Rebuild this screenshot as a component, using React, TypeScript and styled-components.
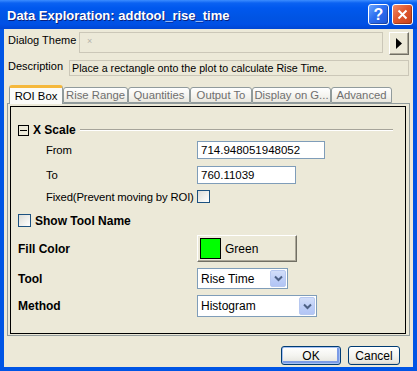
import styled, { createGlobalStyle } from 'styled-components';

const GlobalStyle = createGlobalStyle`
  html, body {
    margin: 0;
    padding: 0;
    background: #ffffff;
  }
  body {
    font-family: "Liberation Sans", Arial, sans-serif;
    font-size: 10.7px;
    color: #000;
  }
`;

// window chrome
const Window = styled.div`
  width: 417px;
  height: 371px;
  display: flex;
  flex-direction: column;
  background: #0055e5;
`;

const TitleBar = styled.div`
  height: 29px;
  flex: none;
  display: flex;
  align-items: center;
  padding: 0 4px 0 7px;
  background: linear-gradient(
    to bottom,
    #3c8dff 0px,
    #0b62f2 3px,
    #0058ee 8px,
    #0054e3 18px,
    #0051e6 24px,
    #0046d4 29px
  );
`;

const Title = styled.div`
  flex: 1;
  padding-top: 2px;
  font: bold 13px "Liberation Sans", Arial, sans-serif;
  color: #ffffff;
  text-shadow: 1px 1px 0 #0a1f7c;
  white-space: nowrap;
`;

const CaptionButton = styled.div<{ $close?: boolean }>`
  width: 21px;
  height: 21px;
  box-sizing: border-box;
  margin-left: 3px;
  border: 1px solid #ffffff;
  border-radius: 3px;
  display: flex;
  align-items: center;
  justify-content: center;
  color: #ffffff;
  font: bold 16px "Liberation Sans", Arial, sans-serif;
  background: ${(p) =>
    p.$close
      ? 'linear-gradient(135deg, #f08a68 0%, #e0582f 45%, #c7401b 100%)'
      : 'linear-gradient(135deg, #6aa6ff 0%, #2d6ff0 45%, #1f56d8 100%)'};
  box-shadow: inset -1px -1px 0 rgba(0, 0, 0, 0.25);
`;

const Client = styled.div`
  flex: 1;
  margin: 0 4px 4px;
  background: #ece9d8;
  display: flex;
  flex-direction: column;
  padding-top: 3px;
`;

// top fields
const ThemeRow = styled.div`
  display: flex;
  align-items: flex-start;
  padding-left: 4px;
  height: 23px;
`;

const TopLabel = styled.div<{ $w: number; $top: number }>`
  width: ${(p) => p.$w}px;
  flex: none;
  white-space: nowrap;
  font-size: 11px;
  padding-top: ${(p) => p.$top}px;
`;

const ThemeBox = styled.div`
  width: 304px;
  height: 21px;
  box-sizing: border-box;
  border: 1px solid #cbc7b8;
  background: #ece9d8;
  padding: 3px 0 0 7px;
  color: #b4b2a8;
  font-size: 9px;
`;

const ArrowButton = styled.div`
  width: 20px;
  height: 23px;
  box-sizing: border-box;
  margin-left: 6px;
  border: 1px solid;
  border-color: #ffffff #716f64 #716f64 #ffffff;
  box-shadow: inset -1px -1px 0 #aca899;
  display: flex;
  align-items: center;
  justify-content: center;
`;

const DescRow = styled.div`
  display: flex;
  align-items: flex-start;
  padding-left: 4px;
  margin-top: 5px;
`;

const DescBox = styled.div`
  width: 340px;
  height: 16px;
  box-sizing: border-box;
  border: 1px solid #cbc7b8;
  padding: 1px 0 0 2px;
  white-space: nowrap;
  overflow: hidden;
`;

// tabs
const TabStrip = styled.div`
  display: flex;
  align-items: flex-end;
  height: 18px;
  margin: 9px 0 0 5px;
  position: relative;
  z-index: 1;
`;

const Tab = styled.div<{ $w: number; $active?: boolean }>`
  width: ${(p) => p.$w}px;
  height: ${(p) => (p.$active ? 19 : 16)}px;
  box-sizing: border-box;
  margin-bottom: ${(p) => (p.$active ? -1 : 0)}px;
  border: 1px solid #919b9c;
  border-bottom: ${(p) => (p.$active ? 'none' : '1px solid #919b9c')};
  border-top: ${(p) => (p.$active ? '3px solid #f5b83c' : '1px solid #919b9c')};
  border-radius: 3px 3px 0 0;
  background: ${(p) =>
    p.$active ? '#fbfbf9' : 'linear-gradient(to bottom, #ffffff 0%, #f4f3ee 60%, #e9e7de 100%)'};
  color: ${(p) => (p.$active ? '#000000' : '#6f6f6f')};
  font-size: 11.3px;
  display: flex;
  align-items: center;
  justify-content: center;
  white-space: nowrap;
  padding-bottom: ${(p) => (p.$active ? 1 : 0)}px;
`;

const Panel = styled.div`
  height: 233px;
  margin: 0 3px;
  box-sizing: border-box;
  border: 1px solid #919b9c;
  display: flex;
  padding: 2px 3px 1px 2px;
`;

const GroupBox = styled.div`
  flex: 1;
  border: 1px solid #000000;
  display: flex;
  flex-direction: column;
`;

// form rows
const SectionHeader = styled.div`
  display: flex;
  align-items: center;
  height: 14px;
  margin-top: 16px;
  padding-left: 7px;
  margin-right: 12px;
`;

const CollapseBox = styled.div`
  width: 11px;
  height: 11px;
  box-sizing: border-box;
  border: 1px solid #000000;
  display: flex;
  align-items: center;
  justify-content: center;
  flex: none;
  &::after {
    content: '';
    width: 7px;
    height: 1px;
    background: #000000;
  }
`;

const BoldText = styled.span`
  font-weight: bold;
  font-size: 12px;
  white-space: nowrap;
`;

const HeaderLine = styled.div`
  flex: 1;
  height: 1px;
  margin-left: 4px;
  background: #a6a49a;
  border-bottom: 1px solid #ffffff;
`;

const FieldRow = styled.div<{ $gap: number; $h: number }>`
  display: flex;
  align-items: center;
  height: ${(p) => p.$h}px;
  margin-top: ${(p) => p.$gap}px;
`;

const FieldLabel = styled.div<{ $indent?: boolean; $bold?: boolean }>`
  width: 186px;
  flex: none;
  box-sizing: border-box;
  padding-left: ${(p) => (p.$indent ? 35 : 7)}px;
  font-weight: ${(p) => (p.$bold ? 'bold' : 'normal')};
  font-size: ${(p) => (p.$bold ? 12 : 11.3)}px;
  letter-spacing: ${(p) => (p.$bold ? 0 : -0.15)}px;
  white-space: nowrap;
`;

const CheckRow = styled.div`
  display: flex;
  align-items: center;
  gap: 4px;
  padding-left: 7px;
`;

const TextInput = styled.div<{ $w: number }>`
  width: ${(p) => p.$w}px;
  height: 18px;
  box-sizing: border-box;
  border: 1px solid #7f9db9;
  background: #ffffff;
  padding: 2px 0 0 3px;
  font-size: 11.5px;
  white-space: nowrap;
`;

const CheckBox = styled.div`
  width: 13px;
  height: 13px;
  box-sizing: border-box;
  border: 1px solid #1c5180;
  background: linear-gradient(135deg, #dcdcd7 0%, #f2f2ef 60%, #ffffff 100%);
  flex: none;
`;

const ColorButton = styled.div`
  width: 100px;
  height: 27px;
  box-sizing: border-box;
  border: 1px solid;
  border-color: #ffffff #716f64 #716f64 #ffffff;
  box-shadow: inset -1px -1px 0 #aca899;
  display: flex;
  align-items: center;
  padding-left: 2px;
  gap: 4px;
`;

const Swatch = styled.div<{ $color: string }>`
  width: 21px;
  height: 21px;
  box-sizing: border-box;
  border: 1px solid #000000;
  background: ${(p) => p.$color};
`;

const Select = styled.div<{ $w: number; $h: number }>`
  width: ${(p) => p.$w}px;
  height: ${(p) => p.$h}px;
  box-sizing: border-box;
  border: 1px solid #7f9db9;
  background: #ffffff;
  display: flex;
  align-items: center;
  padding: 1px 1px 1px 3px;
`;

const SelectText = styled.span`
  flex: 1;
  font-size: 12px;
  white-space: nowrap;
`;

const DropButton = styled.div`
  width: 16px;
  align-self: stretch;
  box-sizing: border-box;
  border: 1px solid #b7c8f0;
  border-radius: 2px;
  background: linear-gradient(to bottom, #d2def9 0%, #bccdf7 60%, #b2c5f5 100%);
  display: flex;
  align-items: center;
  justify-content: center;
`;

// footer
const Footer = styled.div`
  display: flex;
  justify-content: flex-end;
  gap: 7px;
  margin-top: 10px;
  padding-right: 13px;
`;

const PushButton = styled.div<{ $w: number; $default?: boolean }>`
  width: ${(p) => p.$w}px;
  height: 19px;
  box-sizing: border-box;
  border: 1px solid #003c74;
  border-radius: 3px;
  background: linear-gradient(to bottom, #ffffff 0%, #f4f4f0 50%, #e6e5de 90%, #d6d0c5 100%);
  box-shadow: ${(p) =>
    p.$default ? 'inset 0 0 0 1px #a6c1f2, inset -1px -1px 0 2px #7b9be6' : 'none'};
  display: flex;
  align-items: center;
  justify-content: center;
  font-size: 12px;
`;

const tabs = [
  { label: 'ROI Box', w: 54, active: true },
  { label: 'Rise Range', w: 65 },
  { label: 'Quantities', w: 62 },
  { label: 'Output To', w: 62 },
  { label: 'Display on G...', w: 79 },
  { label: 'Advanced', w: 61 },
];

const Chevron = () => (
  <svg width="9" height="7" viewBox="0 0 9 7">
    <path d="M1 1.5 L4.5 5 L8 1.5" fill="none" stroke="#4d6185" strokeWidth="2" />
  </svg>
);

export default function App() {
  return (
    <>
      <GlobalStyle />
      <Window>
        <TitleBar>
          <Title>Data Exploration: addtool_rise_time</Title>
          <CaptionButton>?</CaptionButton>
          <CaptionButton $close>
            <svg width="11" height="11" viewBox="0 0 11 11">
              <path d="M1.5 1.5 L9.5 9.5 M9.5 1.5 L1.5 9.5" stroke="#ffffff" strokeWidth="2" />
            </svg>
          </CaptionButton>
        </TitleBar>

        <Client>
          <ThemeRow>
            <TopLabel $w={71} $top={2}>Dialog Theme</TopLabel>
            <ThemeBox>×</ThemeBox>
            <ArrowButton>
              <svg width="6" height="11" viewBox="0 0 6 11">
                <path d="M0 0 L6 5.5 L0 11 Z" fill="#000000" />
              </svg>
            </ArrowButton>
          </ThemeRow>

          <DescRow>
            <TopLabel $w={61} $top={0}>Description</TopLabel>
            <DescBox>Place a rectangle onto the plot to calculate Rise Time.</DescBox>
          </DescRow>

          <TabStrip>
            {tabs.map((t) => (
              <Tab key={t.label} $w={t.w} $active={t.active}>
                {t.label}
              </Tab>
            ))}
          </TabStrip>

          <Panel>
            <GroupBox>
              <SectionHeader>
                <CollapseBox />
                <BoldText style={{ marginLeft: 4 }}>X Scale</BoldText>
                <HeaderLine />
              </SectionHeader>

              <FieldRow $gap={4} $h={18}>
                <FieldLabel $indent>From</FieldLabel>
                <TextInput $w={128}>714.948051948052</TextInput>
              </FieldRow>

              <FieldRow $gap={7} $h={18}>
                <FieldLabel $indent>To</FieldLabel>
                <TextInput $w={99}>760.11039</TextInput>
              </FieldRow>

              <FieldRow $gap={6} $h={13}>
                <FieldLabel $indent>Fixed(Prevent moving by ROI)</FieldLabel>
                <CheckBox />
              </FieldRow>

              <FieldRow $gap={11} $h={13}>
                <CheckRow>
                  <CheckBox />
                  <BoldText>Show Tool Name</BoldText>
                </CheckRow>
              </FieldRow>

              <FieldRow $gap={8} $h={27}>
                <FieldLabel $bold>Fill Color</FieldLabel>
                <ColorButton>
                  <Swatch $color="#00ff00" />
                  <SelectText>Green</SelectText>
                </ColorButton>
              </FieldRow>

              <FieldRow $gap={6} $h={21}>
                <FieldLabel $bold>Tool</FieldLabel>
                <Select $w={91} $h={21}>
                  <SelectText>Rise Time</SelectText>
                  <DropButton>
                    <Chevron />
                  </DropButton>
                </Select>
              </FieldRow>

              <FieldRow $gap={6} $h={22}>
                <FieldLabel $bold>Method</FieldLabel>
                <Select $w={120} $h={22}>
                  <SelectText>Histogram</SelectText>
                  <DropButton>
                    <Chevron />
                  </DropButton>
                </Select>
              </FieldRow>
            </GroupBox>
          </Panel>

          <Footer>
            <PushButton $w={60} $default>OK</PushButton>
            <PushButton $w={52}>Cancel</PushButton>
          </Footer>
        </Client>
      </Window>
    </>
  );
}
